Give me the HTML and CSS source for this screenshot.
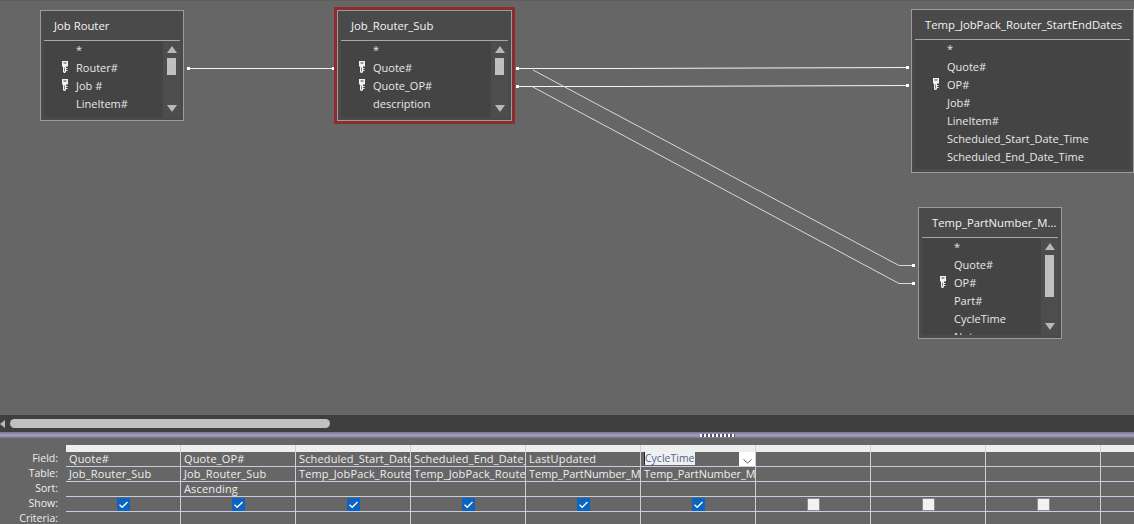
FILE: index.html
```html
<!DOCTYPE html>
<html lang="en">
<head>
<meta charset="utf-8">
<title>Query Design</title>
<link rel="stylesheet" href="styles.css">
</head>
<body>
<svg width="0" height="0" class="defs" aria-hidden="true">
  <symbol id="key" viewBox="0 0 6 12">
    <path d="M0 0h6v5.500H4V11L3 12H2L1 11V5.500H0z M1.500 1.500v1h3v-1z" fill="#f2f2f2" fill-rule="evenodd"/>
    <path d="M2.300 6.500h.7v4h-.7z" fill="#555"/>
    <path d="M4 7h1.500v1H4zM4 9h1.500v1H4z" fill="#f2f2f2"/>
  </symbol>
  <symbol id="check" viewBox="0 0 13 13">
    <rect width="13" height="13" fill="#0a64c2"/>
    <path d="M2.500 6.800l2.700 2.500 5.300-5.300" fill="none" stroke="#fff" stroke-width="1.300"/>
  </symbol>
</svg>
<main class="app">
  <section class="canvas">
    <svg class="joins" width="1134" height="415" viewBox="0 0 1134 415">
      <g fill="none" stroke="#f4f4f4" stroke-width="1">
        <path d="M188 68.500H333"/>
        <path d="M517 68.500H620L908 67.500"/>
        <path d="M517 86.500H620L908 85.500"/>
      </g>
      <g fill="none" stroke="#d8d8d8" stroke-width="1">
        <path d="M533 70L899 265.500H914"/>
        <path d="M532 86.500L899 283.500H914"/>
      </g>
      <g fill="#fff">
        <rect x="187" y="67" width="3" height="3"/><rect x="332" y="67" width="3" height="3"/>
        <rect x="516" y="67" width="3" height="3"/><rect x="516" y="85" width="3" height="3"/>
        <rect x="906" y="66" width="3" height="3"/><rect x="906" y="84" width="3" height="3"/>
        <rect x="912" y="264" width="3" height="3"/><rect x="912" y="282" width="3" height="3"/>
      </g>
    </svg>

    <article class="tbl tbl-router">
      <h2 class="title">Job Router</h2>
      <div class="body">
        <ul class="fields">
          <li>*</li>
          <li><svg class="key"><use href="#key"/></svg>Router#</li>
          <li><svg class="key"><use href="#key"/></svg>Job #</li>
          <li>LineItem#</li>
        </ul>
        <div class="sb"><i class="up"></i><b class="thumb thumb-short"></b><i class="down"></i></div>
      </div>
    </article>

    <article class="tbl tbl-sub">
      <h2 class="title">Job_Router_Sub</h2>
      <div class="body">
        <ul class="fields">
          <li>*</li>
          <li><svg class="key"><use href="#key"/></svg>Quote#</li>
          <li><svg class="key"><use href="#key"/></svg>Quote_OP#</li>
          <li>description</li>
        </ul>
        <div class="sb"><i class="up"></i><b class="thumb thumb-short"></b><i class="down"></i></div>
      </div>
    </article>

    <article class="tbl tbl-dates">
      <h2 class="title">Temp_JobPack_Router_StartEndDates</h2>
      <div class="body">
        <ul class="fields">
          <li>*</li>
          <li>Quote#</li>
          <li><svg class="key"><use href="#key"/></svg>OP#</li>
          <li>Job#</li>
          <li>LineItem#</li>
          <li>Scheduled_Start_Date_Time</li>
          <li>Scheduled_End_Date_Time</li>
        </ul>
      </div>
    </article>

    <article class="tbl tbl-part">
      <h2 class="title">Temp_PartNumber_M...</h2>
      <div class="body">
        <ul class="fields">
          <li>*</li>
          <li>Quote#</li>
          <li><svg class="key"><use href="#key"/></svg>OP#</li>
          <li>Part#</li>
          <li>CycleTime</li>
          <li>Notes</li>
        </ul>
        <div class="sb"><i class="up"></i><b class="thumb thumb-long"></b><i class="down"></i></div>
      </div>
    </article>
  </section>

  <div class="hbar"><i class="left"></i><b class="hthumb"></b></div>
  <div class="splitter"><span class="grip"></span></div>

  <section class="qbe">
    <div class="labels">
      <span>Field:</span><span>Table:</span><span>Sort:</span><span>Show:</span><span>Criteria:</span>
    </div>
    <div class="col">
      <div class="head"></div>
      <div class="cell">Quote#</div><div class="cell">Job_Router_Sub</div><div class="cell"></div>
      <div class="cell cell-check"><svg class="chk"><use href="#check"/></svg></div><div class="cell"></div>
    </div>
    <div class="col">
      <div class="head"></div>
      <div class="cell">Quote_OP#</div><div class="cell">Job_Router_Sub</div><div class="cell">Ascending</div>
      <div class="cell cell-check"><svg class="chk"><use href="#check"/></svg></div><div class="cell"></div>
    </div>
    <div class="col">
      <div class="head"></div>
      <div class="cell">Scheduled_Start_Date_Time</div><div class="cell">Temp_JobPack_Router_StartEndDates</div><div class="cell"></div>
      <div class="cell cell-check"><svg class="chk"><use href="#check"/></svg></div><div class="cell"></div>
    </div>
    <div class="col">
      <div class="head"></div>
      <div class="cell">Scheduled_End_Date_Time</div><div class="cell">Temp_JobPack_Router_StartEndDates</div><div class="cell"></div>
      <div class="cell cell-check"><svg class="chk"><use href="#check"/></svg></div><div class="cell"></div>
    </div>
    <div class="col">
      <div class="head"></div>
      <div class="cell">LastUpdated</div><div class="cell cell-tight">Temp_PartNumber_Main</div><div class="cell"></div>
      <div class="cell cell-check"><svg class="chk"><use href="#check"/></svg></div><div class="cell"></div>
    </div>
    <div class="col">
      <div class="head"></div>
      <div class="cell cell-active"><span class="sel">CycleTime</span><span class="combo"><svg width="9" height="5" viewBox="0 0 9 5"><path d="M.5.500l4 3.500 4-3.500" fill="none" stroke="#555" stroke-width="1"/></svg></span></div>
      <div class="cell cell-tight">Temp_PartNumber_Main</div><div class="cell"></div>
      <div class="cell cell-check"><svg class="chk"><use href="#check"/></svg></div><div class="cell"></div>
    </div>
    <div class="col">
      <div class="head"></div>
      <div class="cell"></div><div class="cell"></div><div class="cell"></div>
      <div class="cell cell-check"><span class="box"></span></div><div class="cell"></div>
    </div>
    <div class="col">
      <div class="head"></div>
      <div class="cell"></div><div class="cell"></div><div class="cell"></div>
      <div class="cell cell-check"><span class="box"></span></div><div class="cell"></div>
    </div>
    <div class="col">
      <div class="head"></div>
      <div class="cell"></div><div class="cell"></div><div class="cell"></div>
      <div class="cell cell-check"><span class="box"></span></div><div class="cell"></div>
    </div>
    <div class="col">
      <div class="head"></div>
      <div class="cell"></div><div class="cell"></div><div class="cell"></div>
      <div class="cell cell-check"></div><div class="cell"></div>
    </div>
  </section>
</main>
</body>
</html>
```

FILE: styles.css
```css
* { box-sizing: border-box; }
html, body { margin: 0; padding: 0; height: 100%; overflow: hidden; }
body {
  background: #666;
  color: #eee;
  font-family: "Open Sans", "Noto Sans", "Liberation Sans", sans-serif;
  font-size: 11px;
}
.defs { position: absolute; }
.app { display: flex; flex-direction: column; width: 1134px; height: 524px; overflow: hidden; }

/* Diagram surface */
.canvas { position: relative; height: 415px; flex: none; background: #666; box-shadow: inset 0 1px 0 #5e5e5e; }
.joins { position: absolute; left: 0; top: 0; }
.tbl {
  position: absolute;
  display: flex;
  flex-direction: column;
  background: #4a4a4a;
  border: 1px solid #9c9c9c;
  padding: 0 3px 3px;
}
.tbl-router { left: 40px; top: 10px; width: 144px; height: 111px; }
.tbl-sub { left: 337px; top: 10px; width: 175px; height: 111px; outline: 3px solid #8e2b2e; }
.tbl-dates { left: 911px; top: 9px; width: 223px; height: 164px; }
.tbl-part { left: 918px; top: 207px; width: 144px; height: 132px; }
.title {
  margin: 0;
  height: 30px;
  flex: none;
  padding: 7px 0 0 10px;
  font-size: 11.300px;
  font-weight: 400;
  line-height: 15px;
  white-space: nowrap;
  overflow: hidden;
  color: #f4f4f4;
  border-bottom: 1px solid #a8a8a8;
}
.body { flex: 1; min-height: 0; display: flex; background: #444; overflow: hidden; }
.fields { list-style: none; margin: 0; padding: 0 0 0 32px; flex: 1; min-width: 0; }
.fields li { position: relative; height: 18px; line-height: 18px; white-space: nowrap; color: #e8e8e8; }
.key { position: absolute; left: -14px; top: 2px; width: 6px; height: 12px; }
.sb { width: 17px; flex: none; background: #4d4d4d; display: flex; flex-direction: column; align-items: center; padding: 5px 0; }
.thumb { display: block; width: 9px; background: #c0c0c0; margin-top: 5px; }
.thumb-short { height: 17px; }
.thumb-long { height: 43px; }
.up, .down { display: block; width: 0; height: 0; border-left: 5px solid transparent; border-right: 5px solid transparent; }
.up { border-bottom: 7px solid #b8b8b8; }
.down { border-top: 7px solid #b8b8b8; margin-top: auto; }
.tbl-part .down { margin-top: 26px; }

/* Horizontal scrollbar */
.hbar { height: 17px; flex: none; background: #3f3f3f; display: flex; align-items: center; }
.left { width: 0; height: 0; border-top: 4px solid transparent; border-bottom: 4px solid transparent; border-right: 5px solid #b8b8b8; }
.hthumb { display: block; width: 320px; height: 9px; margin-left: 5px; border-radius: 5px; background: #c0c0c0; }

/* Splitter */
.splitter {
  height: 6px;
  flex: none;
  display: flex;
  align-items: center;
  padding-left: 700px;
  background: linear-gradient(#77758f, #a3a1c0 55%, #76748b);
}
.grip {
  width: 35px;
  height: 3px;
  background: repeating-linear-gradient(90deg, #fff 0 2px, #55536a 2px 4px);
}

/* Query grid */
.qbe { flex: 1; display: grid; grid-template-columns: 66px repeat(10, 115px); padding-top: 7px; background: #666; }
.labels {
  display: flex;
  flex-direction: column;
  padding: 6px 8px 0 0;
  text-align: right;
  font-size: 10.500px;
}
.labels span { height: 15px; line-height: 15px; color: #eee; }
.col { display: flex; flex-direction: column; border-right: 1px solid #cfcfd4; }
.head { height: 7px; flex: none; background: #eee; }
.cell {
  position: relative;
  height: 15px;
  flex: none;
  padding-left: 3px;
  line-height: 13px;
  letter-spacing: .15px;
  white-space: nowrap;
  overflow: hidden;
  border-bottom: 1px solid #c8cce0;
  color: #eee;
}
.cell-tight { letter-spacing: -.05px; }
.cell-check { display: flex; justify-content: center; align-items: center; padding-left: 0; }
.chk { width: 13px; height: 13px; }
.box { width: 13px; height: 13px; background: #f2f2f2; border: 1px solid #8a8a8a; }
.cell-active { display: flex; }
.sel { height: 13px; line-height: 13px; margin-top: 0; font-size: 10.500px; letter-spacing: 0; background: #eef0f8; color: #5a6478; border-left: 1px solid #222; }
.combo {
  position: absolute;
  right: 0;
  top: 0;
  width: 16px;
  height: 14px;
  background: #fff;
  display: flex;
  align-items: flex-end;
  justify-content: center;
  padding-bottom: 2px;
}
```
